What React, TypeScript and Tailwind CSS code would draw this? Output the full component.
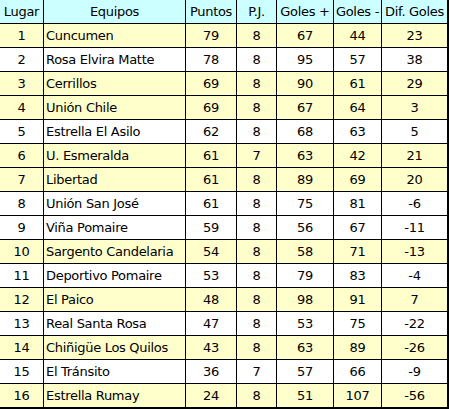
const rows: [number, string, number, number, number, number, number][] = [
  [1, 'Cuncumen', 79, 8, 67, 44, 23],
  [2, 'Rosa Elvira Matte', 78, 8, 95, 57, 38],
  [3, 'Cerrillos', 69, 8, 90, 61, 29],
  [4, 'Unión Chile', 69, 8, 67, 64, 3],
  [5, 'Estrella El Asilo', 62, 8, 68, 63, 5],
  [6, 'U. Esmeralda', 61, 7, 63, 42, 21],
  [7, 'Libertad', 61, 8, 89, 69, 20],
  [8, 'Unión San José', 61, 8, 75, 81, -6],
  [9, 'Viña Pomaire', 59, 8, 56, 67, -11],
  [10, 'Sargento Candelaria', 54, 8, 58, 71, -13],
  [11, 'Deportivo Pomaire', 53, 8, 79, 83, -4],
  [12, 'El Paico', 48, 8, 98, 91, 7],
  [13, 'Real Santa Rosa', 47, 8, 53, 75, -22],
  [14, 'Chiñigüe Los Quilos', 43, 8, 63, 89, -26],
  [15, 'El Tránsito', 36, 7, 57, 66, -9],
  [16, 'Estrella Rumay', 24, 8, 51, 107, -56],
];

// rows shaded yellow in the original page
const shaded = [1, 3, 4, 6, 7, 10, 12, 14, 16];

const headers = ['Lugar', 'Equipos', 'Puntos', 'P.J.', 'Goles +', 'Goles -', 'Dif. Goles'];

export default function App() {
  return (
    <div
      className="w-[449px] bg-white text-[13px] leading-none tracking-[-0.3px] text-black"
      style={{ fontFamily: '"DejaVu Sans", Verdana, sans-serif' }}
    >
      <div className="grid grid-cols-[44px_142px_51px_40px_57px_48px_67px]">
        {headers.map((h, i) => (
          <div
            key={h}
            className={`flex h-[24px] items-center justify-center whitespace-nowrap border-b border-r border-black bg-[#ccffff] ${
              i === 6 ? 'border-r-2' : ''
            }`}
          >
            {h}
          </div>
        ))}
        {rows.map((r, ri) => {
          const bg = shaded.includes(r[0]) ? 'bg-[#ffffcc]' : 'bg-white';
          const last = ri === rows.length - 1;
          return r.map((v, ci) => (
            <div
              key={`${ri}-${ci}`}
              className={`flex items-center whitespace-nowrap border-r border-black ${bg} ${
                last ? 'h-[25px] border-b-2' : 'h-[24px] border-b'
              } ${ci === 1 ? 'justify-start pl-[2px]' : 'justify-center'} ${ci === 6 ? 'border-r-2' : ''}`}
            >
              {v}
            </div>
          ));
        })}
      </div>
    </div>
  );
}
